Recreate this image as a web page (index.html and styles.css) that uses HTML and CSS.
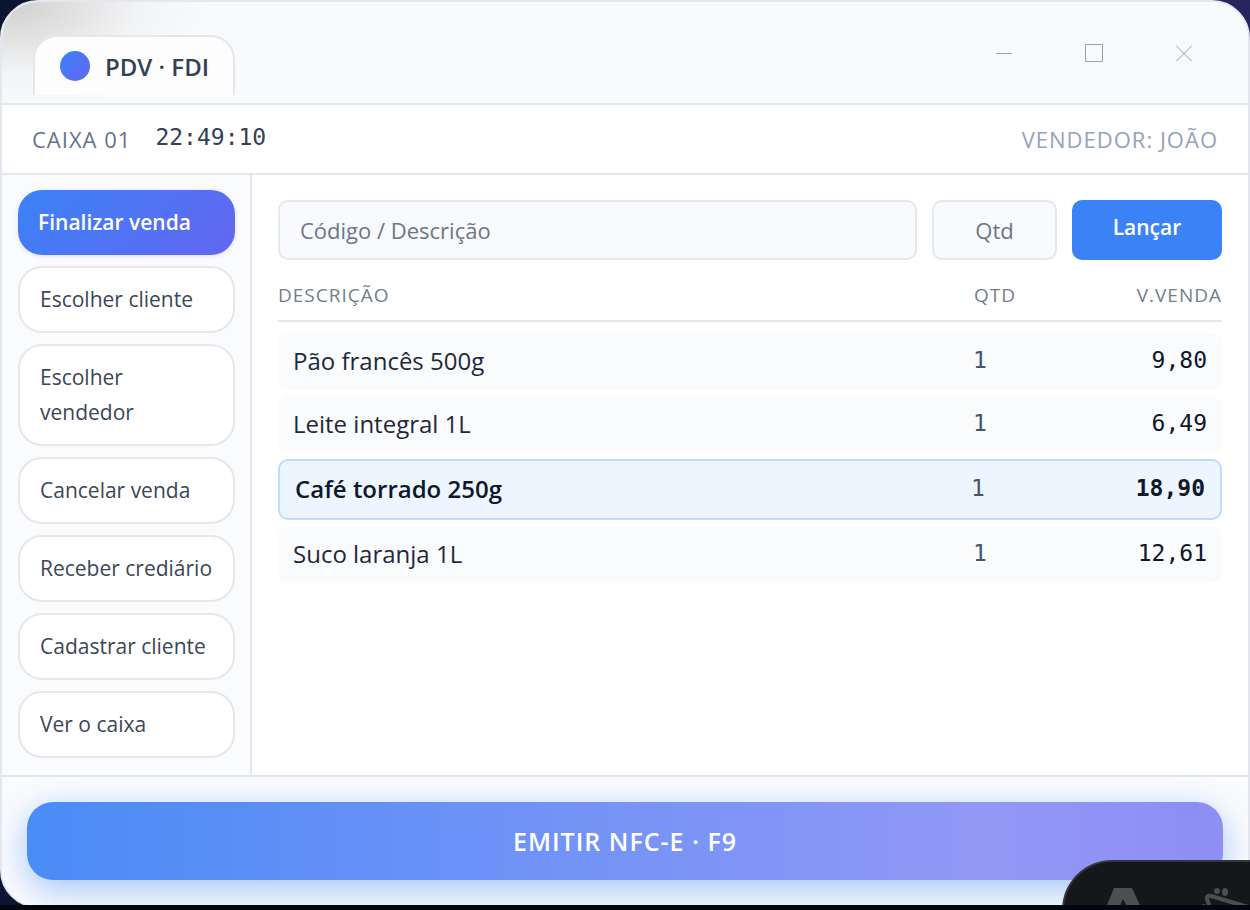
FILE: index.html
```html
<!DOCTYPE html>
<html lang="pt-BR">
<head>
<meta charset="utf-8">
<title>PDV · FDI</title>
<link rel="stylesheet" href="styles.css">
</head>
<body>
<div class="window">
  <header class="titlebar">
    <div class="tab"><span class="tab-dot"></span>PDV · FDI</div>
    <div class="controls">
      <button type="button" aria-label="Minimizar"><svg width="20" height="20" viewBox="0 0 20 20"><path d="M2 10.500H18"/></svg></button>
      <button type="button" aria-label="Maximizar"><svg width="20" height="20" viewBox="0 0 20 20"><path d="M1.500 1.500H18.500V18.500H1.500Z"/></svg></button>
      <button type="button" aria-label="Fechar"><svg width="20" height="20" viewBox="0 0 20 20"><path d="M2 2.500L18 18.500M18 2.500L2 18.500"/></svg></button>
    </div>
  </header>
  <div class="status">
    <span class="register">CAIXA 01</span>
    <time class="clock">22:49:10</time>
    <span class="seller">VENDEDOR: JOÃO</span>
  </div>
  <div class="body">
    <nav class="sidebar">
      <button type="button" class="action action-primary">Finalizar venda</button>
      <button type="button" class="action">Escolher cliente</button>
      <button type="button" class="action">Escolher vendedor</button>
      <button type="button" class="action">Cancelar venda</button>
      <button type="button" class="action">Receber crediário</button>
      <button type="button" class="action">Cadastrar cliente</button>
      <button type="button" class="action">Ver o caixa</button>
    </nav>
    <main class="main">
      <form class="entry">
        <input class="field field-code" type="text" placeholder="Código / Descrição" aria-label="Código / Descrição">
        <input class="field field-qty" type="text" placeholder="Qtd" aria-label="Qtd">
        <button type="button" class="add">Lançar</button>
      </form>
      <table class="items">
        <thead>
          <tr><th>DESCRIÇÃO</th><th>QTD</th><th>V.VENDA</th></tr>
        </thead>
        <tbody>
          <tr><td>Pão francês 500g</td><td>1</td><td>9,80</td></tr>
          <tr><td>Leite integral 1L</td><td>1</td><td>6,49</td></tr>
          <tr class="selected"><td>Café torrado 250g</td><td>1</td><td>18,90</td></tr>
          <tr><td>Suco laranja 1L</td><td>1</td><td>12,61</td></tr>
        </tbody>
      </table>
    </main>
  </div>
  <footer class="footer">
    <button type="button" class="emit">EMITIR NFC-E · F9</button>
  </footer>
</div>
<div class="widget">
  <svg width="186" height="48" viewBox="0 0 186 48">
    <path fill="#4d4e52" d="M41 48L50 26H68L78 48H65L59 37L54 48Z"/>
    <g fill="none" stroke="#4d4e52" stroke-width="4" stroke-linecap="round" stroke-linejoin="round"><path d="M146 46L143 37Q142 33 147 34L184 45"/><path d="M138 45L140 44"/></g>
    <circle cx="153" cy="29" r="3" fill="#4d4e52"/><ellipse cx="161" cy="30" rx="3" ry="4" fill="#4d4e52"/>
  </svg>
</div>
<div class="base"></div>
</body>
</html>
```
FILE: styles.css
```css
* { box-sizing: border-box; }
body {
  margin: 0;
  height: 100vh;
  overflow: hidden;
  position: relative;
  background: linear-gradient(90deg, #0b1433, #26265f);
  font-family: "Open Sans", "Noto Sans", sans-serif;
  color: #334155;
}
button, input { font: inherit; }
.window {
  display: flex;
  flex-direction: column;
  min-height: calc(100vh - 2px);
  border: 2px solid #e4e7f0;
  border-radius: 38px;
  overflow: hidden;
  background: #fff;
}
.titlebar {
  display: flex;
  justify-content: space-between;
  align-items: flex-start;
  height: 103px;
  padding: 33px 54px 0 31px;
  border-bottom: 2px solid #e2e8f0;
  background: radial-gradient(ellipse 200px 110px at 10px 0, #cfcfd0, #e3e3e4 35%, #f3f4f5 65%, transparent), #f9fafc;
}
.tab {
  display: flex;
  align-items: center;
  gap: 15px;
  height: 60px;
  padding: 0 24px 0 25px;
  border: 2px solid #e4e7f0;
  border-bottom: 0;
  border-radius: 24px 24px 0 0;
  background: #fdfdfe;
  font-size: 24px;
  font-weight: 600;
}
.tab-dot {
  width: 30px;
  height: 30px;
  border-radius: 50%;
  background: linear-gradient(135deg, #3b82f6, #6366f1);
}
.controls { display: flex; gap: 70px; padding-top: 8px; }
.controls button { display: flex; padding: 0; border: 0; background: none; }
.controls svg { fill: none; stroke: #979fb4; stroke-width: 1; }
.status {
  display: flex;
  align-items: center;
  gap: 24px;
  height: 70px;
  padding: 0 30px;
  border-bottom: 2px solid #e5e7eb;
  font-size: 22px;
}
.register { color: #64748b; letter-spacing: 1px; }
.clock { font-family: "DejaVu Sans Mono", monospace; font-size: 23px; padding-bottom: 4px; }
.seller { margin-left: auto; color: #94a3b8; letter-spacing: 1px; }
.body { flex: 1; display: flex; }
.sidebar {
  flex: 0 0 250px;
  display: flex;
  flex-direction: column;
  gap: 11px;
  padding: 15px 15px 16px 16px;
  border-right: 2px solid #e5e7eb;
  background: #fafbfd;
}
.action {
  padding: 14px 16px 14px 20px;
  border: 2px solid #e5e7eb;
  border-radius: 24px;
  background: #fff;
  color: #3b4657;
  font-size: 21px;
  line-height: 35px;
  text-align: left;
}
.action-primary {
  padding: 15px 20px;
  border: 0;
  background: linear-gradient(135deg, #3b82f6, #6366f1);
  color: #fff;
  font-weight: 600;
  box-shadow: 0 1px 4px #6366f133;
}
.main { flex: 1; min-width: 0; padding: 25px 26px 0; }
.entry { display: flex; gap: 15px; }
.field {
  height: 60px;
  padding: 0 20px;
  border: 2px solid #e4e8f0;
  border-radius: 10px;
  background: #f9fafc;
  font-size: 22px;
}
.field::placeholder { color: #6b7688; opacity: 1; }
.field-code { flex: 1; min-width: 0; }
.field-qty { width: 125px; text-align: center; }
.add {
  width: 150px;
  padding: 0 0 6px;
  border: 0;
  border-radius: 10px;
  background: #3b82f6;
  color: #fff;
  font-size: 21px;
  font-weight: 600;
}
.items, .items thead, .items tbody { display: block; }
.items tr { display: grid; grid-template-columns: 1fr 74px 160px; align-items: center; }
.items thead tr {
  grid-template-columns: 1fr 88px 160px;
  height: 62px;
  padding-top: 10px;
  border-bottom: 2px solid #e2e4ee;
}
.items th { padding: 0; color: #747c8d; font-size: 19px; font-weight: 400; letter-spacing: 1px; text-align: left; }
.items tbody { display: flex; flex-direction: column; gap: 6px; padding-top: 11px; }
.items tbody tr { height: 57px; padding: 0 15px; border-radius: 10px; background: #fafbfc; }
.items td { padding: 0 0 2px; color: #1e293b; font-size: 24px; }
.items td + td { padding-bottom: 4px; color: #475569; font-family: "DejaVu Sans Mono", monospace; font-size: 23px; }
.items td:last-child { color: #0f172a; }
.items th:last-child, .items td:last-child { text-align: right; }
.items tbody .selected { height: 61px; border: 2px solid #bfdbfe; background: #edf5ff; }
.selected td:first-child, .selected td:last-child { color: #0f172a; font-weight: 600; }
.selected td:last-child { font-weight: 700; }
.footer {
  height: 131px;
  padding: 25px;
  border-top: 2px solid #e2e6ec;
  background: #fafbfd;
}
.emit {
  width: 100%;
  height: 78px;
  border: 0;
  border-radius: 26px;
  background: linear-gradient(90deg, #4a8cf7, #9298f6 80%, #8e8ef4);
  box-shadow: 0 10px 34px #3b82f673;
  color: #fff;
  font-size: 25px;
  font-weight: 600;
  letter-spacing: 1px;
}
.widget {
  position: absolute;
  right: 0;
  bottom: 0;
  width: 188px;
  height: 50px;
  border-top: 2px solid #35363c;
  border-left: 2px solid #35363c;
  border-radius: 50px 0 0 0;
  background: #16171a;
  overflow: hidden;
}
.base { position: absolute; left: 0; right: 0; bottom: 0; height: 5px; background: #03050f; }
```
